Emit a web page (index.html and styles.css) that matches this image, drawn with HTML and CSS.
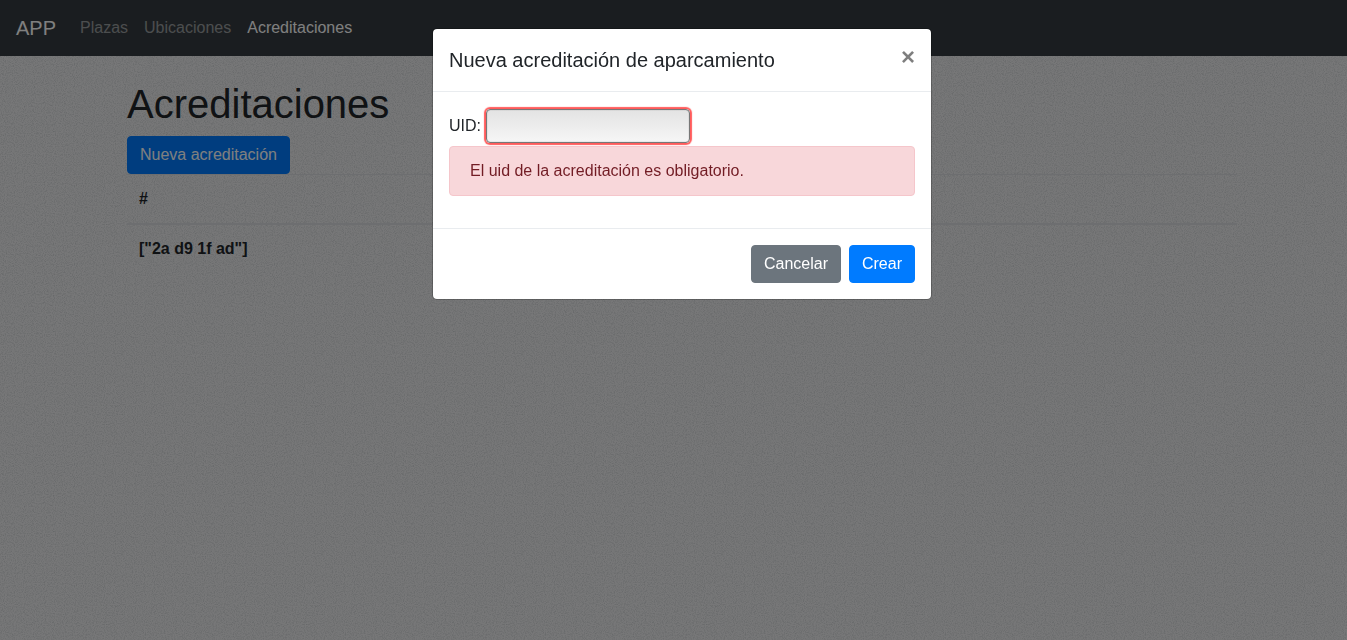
FILE: index.html
```html
<!DOCTYPE html>
<html lang="es">
<head>
<meta charset="utf-8">
<meta name="viewport" content="width=device-width, initial-scale=1">
<title>Acreditaciones</title>
<link rel="stylesheet" href="styles.css">
</head>
<body>
<nav class="navbar">
  <a class="navbar-brand" href="#">APP</a>
  <ul class="navbar-nav">
    <li><a class="nav-link" href="#">Plazas</a></li>
    <li><a class="nav-link" href="#">Ubicaciones</a></li>
    <li><a class="nav-link active" href="#">Acreditaciones</a></li>
  </ul>
</nav>
<main class="page">
  <div class="container">
    <h1 class="page-title">Acreditaciones</h1>
    <button class="btn btn-primary" type="button">Nueva acreditación</button>
    <table class="table">
      <thead><tr><th scope="col">#</th></tr></thead>
      <tbody><tr><th scope="row">["2a d9 1f ad"]</th></tr></tbody>
    </table>
  </div>
</main>
<div class="modal" role="dialog" aria-modal="true" aria-labelledby="modal-title">
  <form class="modal-content" novalidate>
    <header class="modal-header">
      <h5 class="modal-title" id="modal-title">Nueva acreditación de aparcamiento</h5>
      <button class="close" type="button" aria-label="Cerrar">×</button>
    </header>
    <div class="modal-body">
      <div class="field">
        <label for="uid">UID:</label>
        <input class="field-input" id="uid" type="text" aria-describedby="uid-error">
      </div>
      <div class="alert" id="uid-error">El uid de la acreditación es obligatorio.</div>
    </div>
    <footer class="modal-footer">
      <button class="btn btn-secondary" type="button">Cancelar</button>
      <button class="btn btn-primary" type="button">Crear</button>
    </footer>
  </form>
</div>
</body>
</html>
```

FILE: styles.css
```css
:root {
  --scrollbar: 17px;
}

*,
*::before,
*::after {
  box-sizing: border-box;
}

body {
  margin: 0;
  min-height: 100vh;
  overflow-x: hidden;
  font: 400 16px/24px "Liberation Sans", Arial, sans-serif;
  color: #212529;
  background-color: #eeeff0;
  background-image: url("data:image/svg+xml,%3Csvg xmlns='http://www.w3.org/2000/svg' width='200' height='200'%3E%3Cfilter id='n' x='0' y='0' width='100%25' height='100%25' color-interpolation-filters='sRGB'%3E%3CfeTurbulence type='fractalNoise' baseFrequency='.9' numOctaves='2' seed='4' stitchTiles='stitch'/%3E%3CfeColorMatrix values='0 0 0 0 .42 0 0 0 0 .45 0 0 0 0 .48 .5 0 0 0 -.2'/%3E%3C/filter%3E%3Crect width='200' height='200' filter='url(%23n)'/%3E%3C/svg%3E");
}

/* Navigation */
.navbar {
  display: flex;
  align-items: center;
  gap: 16px;
  min-height: 56px;
  padding: 8px 16px;
  background: #343a40;
}

.navbar-brand {
  font-size: 20px;
  line-height: 30px;
  color: #fff;
  text-decoration: none;
}

.navbar-nav {
  display: flex;
  margin: 0;
  padding: 0;
  list-style: none;
}

.nav-link {
  display: block;
  padding: 8px;
  color: rgba(255, 255, 255, .5);
  text-decoration: none;
}

.nav-link.active {
  color: #fff;
}

/* Page */
.page {
  padding-top: 24px;
  margin-right: calc(var(--scrollbar) * -1);
}

.container {
  max-width: 1140px;
  margin: 0 auto;
  padding: 0 15px;
}

.page-title {
  margin: 0 0 8px;
  font-size: 40px;
  font-weight: 400;
  line-height: 48px;
}

.btn {
  display: inline-block;
  padding: 6px 12px;
  border: 1px solid transparent;
  border-radius: 4px;
  font: inherit;
  color: #fff;
  vertical-align: middle;
  cursor: pointer;
}

.btn-primary {
  background: #007bff;
  border-color: #007bff;
}

.btn-secondary {
  background: #6c757d;
  border-color: #6c757d;
}

.table {
  width: 100%;
  margin-bottom: 16px;
  border-collapse: collapse;
}

.table th {
  padding: 12px;
  border-top: 1px solid #dadde1;
  text-align: left;
  font-weight: 700;
}

.table thead th {
  border-bottom: 2px solid #dadde1;
}

/* Dialog */
.modal {
  position: fixed;
  inset: 0;
  right: calc(var(--scrollbar) * -1);
  background: rgba(0, 0, 0, .5);
}

.modal-content {
  width: 100%;
  max-width: 500px;
  margin: 28px auto;
  background: #fff;
  background-clip: padding-box;
  border: 1px solid rgba(0, 0, 0, .2);
  border-radius: 5px;
}

.modal-header {
  display: flex;
  align-items: flex-start;
  justify-content: space-between;
  padding: 16px;
  border-bottom: 1px solid #e9ecef;
}

.modal-title {
  margin: 0;
  font-size: 20px;
  font-weight: 400;
  line-height: 30px;
}

.close {
  margin: -16px;
  padding: 16px;
  border: 0;
  background: transparent;
  font: 700 24px/24px "Liberation Sans", Arial, sans-serif;
  color: #000;
  opacity: .5;
  cursor: pointer;
}

.modal-body {
  padding: 16px;
}

.field {
  display: flex;
  align-items: center;
  gap: 5px;
  min-height: 38px;
  padding-bottom: 2px;
}

.field-input {
  width: 204px;
  height: 34px;
  padding: 4px 8px;
  border: 1px solid #777;
  border-radius: 4px;
  outline: none;
  font: inherit;
  color: inherit;
  background: linear-gradient(#e3e3e3, #f6f6f6);
  box-shadow: 0 0 1px 2px rgba(255, 50, 50, .8), inset 0 0 1px rgba(0, 0, 0, .5);
}

.alert {
  margin-bottom: 16px;
  padding: 12px 20px;
  border: 1px solid #f5c6cb;
  border-radius: 4px;
  color: #721c24;
  background: #f8d7da;
}

.modal-footer {
  display: flex;
  justify-content: flex-end;
  gap: 8px;
  padding: 16px;
  border-top: 1px solid #e9ecef;
}
```
